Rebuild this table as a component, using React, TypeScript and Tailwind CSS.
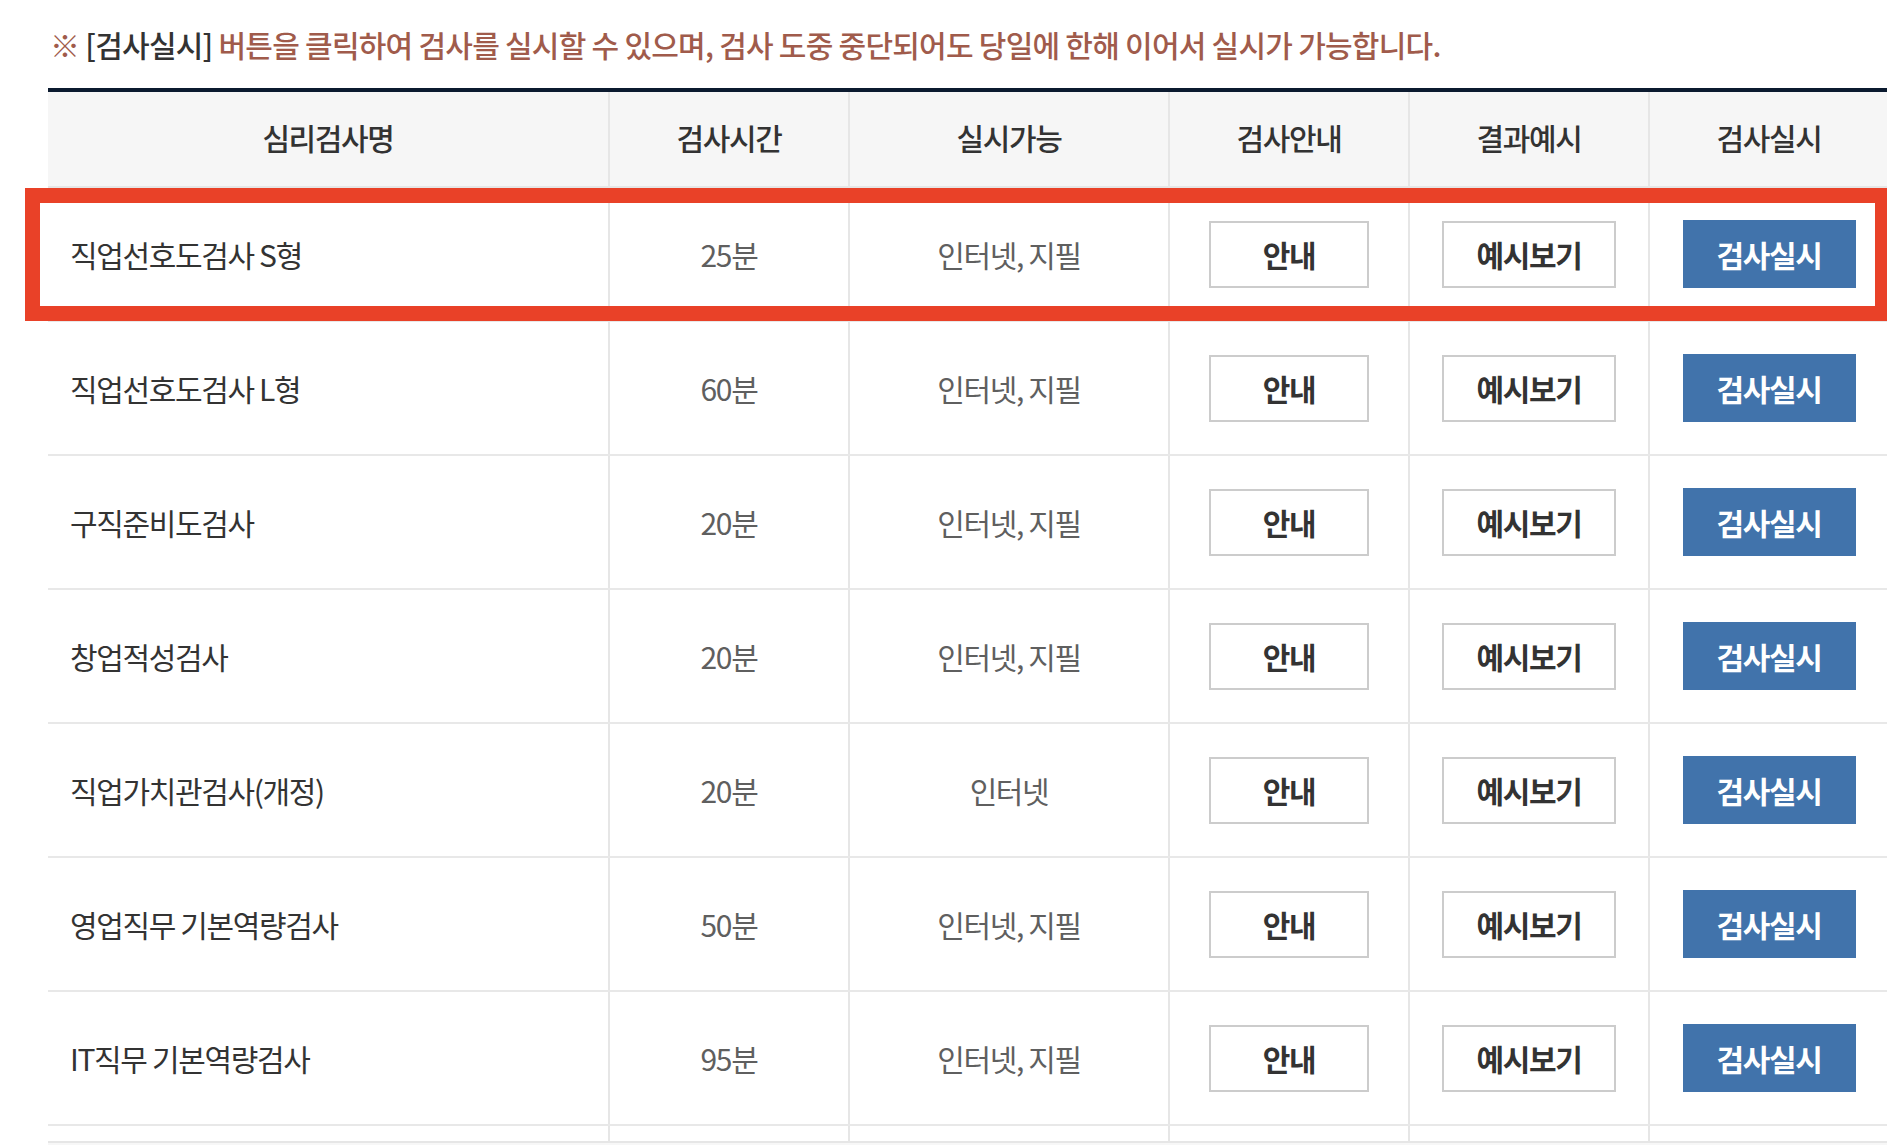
const rows = [
  { name: "직업선호도검사 S형", time: "25분", mode: "인터넷, 지필" },
  { name: "직업선호도검사 L형", time: "60분", mode: "인터넷, 지필" },
  { name: "구직준비도검사", time: "20분", mode: "인터넷, 지필" },
  { name: "창업적성검사", time: "20분", mode: "인터넷, 지필" },
  { name: "직업가치관검사(개정)", time: "20분", mode: "인터넷" },
  { name: "영업직무 기본역량검사", time: "50분", mode: "인터넷, 지필" },
  { name: "IT직무 기본역량검사", time: "95분", mode: "인터넷, 지필" },
];

const headers = ["심리검사명", "검사시간", "실시가능", "검사안내", "결과예시", "검사실시"];

const grid = "grid grid-cols-[560px_240px_320px_240px_240px_240px]";
const cell = "flex items-center justify-center border-l-2 border-[#e6e6e6]";

export default function App() {
  return (
    <div
      className="relative min-h-screen w-full overflow-hidden bg-white text-[#333]"
      style={{ fontFamily: '"Noto Sans CJK KR", "Noto Sans", sans-serif' }}
    >
      <div className="pl-[48px] pt-[26px]">
        <p className="pl-[2px] text-[30px] leading-[36px] font-medium tracking-[-0.025em] text-[#a05b4b]">
          ※ <span className="text-[#333]">[검사실시]</span> 버튼을 클릭하여 검사를 실시할 수 있으며, 검사 도중 중단되어도 당일에 한해 이어서 실시가 가능합니다.
        </p>

        <div className="mt-[26px] w-[1840px] border-t-4 border-[#0b1a2f]">
          <div className={`${grid} h-[96px] border-b-2 border-[#e6e6e6] bg-[#f6f6f6] text-[30px] font-medium tracking-[-0.045em]`}>
            {headers.map((h, i) => (
              <div key={h} className={i === 0 ? "flex items-center justify-center" : cell}>
                <span className="mb-[4px]">{h}</span>
              </div>
            ))}
          </div>

          {rows.map((r) => (
            <div
              key={r.name}
              className={`${grid} h-[134px] border-b-2 border-[#e8e8e8] text-[30px] tracking-[-0.045em]`}
            >
              <div className="flex items-center pl-[22px]">{r.name}</div>
              <div className={`${cell} text-[#5f5f5f]`}>{r.time}</div>
              <div className={`${cell} text-[#5f5f5f]`}>{r.mode}</div>
              <div className={cell}>
                <button className="h-[67px] w-[160px] border-2 border-[#cccccc] bg-white font-bold text-[#333]">
                  안내
                </button>
              </div>
              <div className={cell}>
                <button className="h-[67px] w-[174px] border-2 border-[#cccccc] bg-white font-bold text-[#333]">
                  예시보기
                </button>
              </div>
              <div className={cell}>
                <button className="h-[68px] w-[173px] bg-[#4173ab] font-bold text-white">
                  검사실시
                </button>
              </div>
            </div>
          ))}

          <div className={`${grid} h-[17px] border-b-2 border-[#e6e6e6]`}>
            <div />
            <div className="border-l-2 border-[#e6e6e6]" />
            <div className="border-l-2 border-[#e6e6e6]" />
            <div className="border-l-2 border-[#e6e6e6]" />
            <div className="border-l-2 border-[#e6e6e6]" />
            <div className="border-l-2 border-[#e6e6e6]" />
          </div>
          <div className="h-[40px] bg-[#f7f7f7]" />
        </div>
      </div>

      {/* highlight box */}
      <div className="pointer-events-none absolute left-[25px] top-[188px] h-[133px] w-[1865px] border-[15px] border-[#e94128]" />

      {/* floating widget tab */}
      <div className="absolute bottom-[-10px] left-0 h-[27px] w-[41px] rounded-tr-[8px] bg-[#f2d3e2] shadow-[0_0_12px_rgba(0,0,0,0.08)]">
        <div className="absolute left-[10px] top-[12px] h-[10px] w-[2px] bg-[#333]" />
      </div>
    </div>
  );
}
